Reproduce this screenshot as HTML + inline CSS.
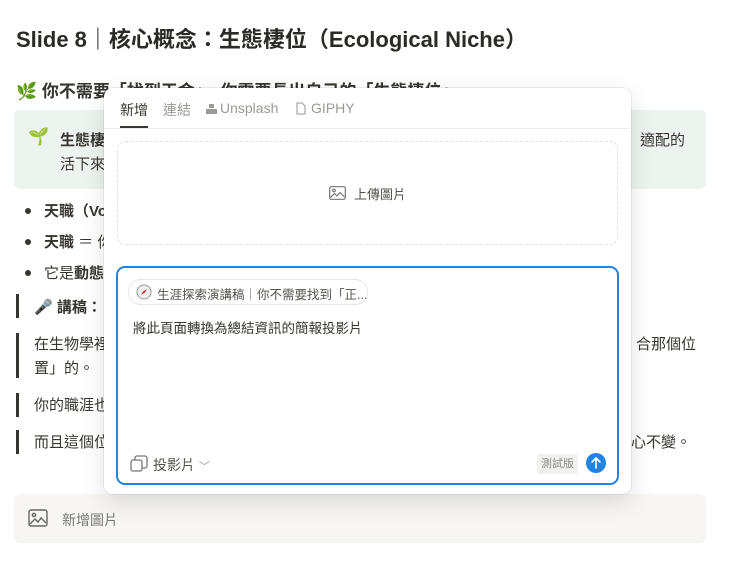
<!DOCTYPE html>
<html><head><meta charset="utf-8"><style>
*{margin:0;padding:0;box-sizing:border-box}
body{width:740px;height:577px;background:#fff;position:relative;overflow:hidden;font-family:"Liberation Sans","Noto Sans CJK TC",sans-serif;color:#37352f}
.a{position:absolute;white-space:nowrap}
.q{position:absolute;left:16px;width:3px;background:#37352f}
.dot{position:absolute;left:25px;width:6px;height:6px;border-radius:50%;background:#37352f}
</style></head><body>
<div class="a" style="left:16px;top:22px;font-size:22px;font-weight:bold;color:#2b2a27">Slide 8｜核心概念：生態棲位（Ecological Niche）</div>
<div class="a" style="left:16px;top:77px;font-size:17px;font-weight:bold">🌿 你不需要「找到天命」，你需要長出自己的「生態棲位」</div>
<div class="a" style="left:14px;top:110px;width:692px;height:79px;background:#edf3ee;border-radius:6px"></div>
<div class="a" style="left:28px;top:127px;font-size:17px;color:#4caf50">🌱</div>
<div class="a" style="left:60px;top:129px;font-size:15px;font-weight:bold">生態棲</div>
<div class="a" style="left:60px;top:153px;font-size:15px">活下來</div>
<div class="a" style="left:640px;top:129px;font-size:15px">適配的</div>
<div class="dot" style="top:208px"></div><div class="a" style="left:44px;top:200px;font-size:15px;font-weight:bold">天職（Vo</div>
<div class="dot" style="top:239px"></div><div class="a" style="left:44px;top:231px;font-size:15px"><b>天職</b> ＝ 你</div>
<div class="dot" style="top:270px"></div><div class="a" style="left:44px;top:262px;font-size:15px">它是<b>動態</b></div>
<div class="q" style="top:294px;height:24px"></div><div class="a" style="left:34px;top:296px;font-size:15px;font-weight:bold">🎤 講稿：</div>
<div class="q" style="top:333px;height:45px"></div><div class="a" style="left:34px;top:333px;font-size:15px;line-height:24px">在生物學裡<br>置」的。</div>
<div class="a" style="left:636px;top:333px;font-size:15px">合那個位</div>
<div class="q" style="top:393px;height:24px"></div><div class="a" style="left:34px;top:394px;font-size:15px">你的職涯也</div>
<div class="q" style="top:430px;height:24px"></div><div class="a" style="left:34px;top:431px;font-size:15px">而且這個位</div>
<div class="a" style="left:631px;top:431px;font-size:15px">心不變。</div>
<div class="a" style="left:14px;top:494px;width:692px;height:49px;background:#f7f6f3;border-radius:6px"></div>
<svg class="a" style="left:28px;top:509px" width="20" height="18" viewBox="0 0 20 18" fill="none" stroke="#666" stroke-width="1.4"><rect x="1" y="1" width="18" height="16" rx="2"/><circle cx="6" cy="6" r="1.6"/><path d="M2 15l5-5 3 3 3-4 5 5"/></svg>
<div class="a" style="left:62px;top:510px;font-size:14px;color:#787774">新增圖片</div>

<div class="a" style="left:104px;top:88px;width:527px;height:406px;background:#fff;border-radius:9px;box-shadow:0 0 0 1px rgba(0,0,0,.06),0 8px 24px rgba(0,0,0,.12)"></div>
<div class="a" style="left:120px;top:100px;font-size:14px;color:#37352f">新增</div>
<div class="a" style="left:120px;top:126px;width:28px;height:2px;background:#37352f"></div>
<div class="a" style="left:104px;top:128px;width:527px;height:1px;background:#ececea"></div>
<div class="a" style="left:163px;top:100px;font-size:14px;color:#9b9a97">連結</div>
<svg class="a" style="left:206px;top:103px" width="11" height="11" viewBox="0 0 11 11" fill="#9b9a97"><rect x="3" y="1" width="5" height="4"/><rect x="0" y="6" width="11" height="5"/></svg>
<div class="a" style="left:220px;top:100px;font-size:14px;color:#9b9a97">Unsplash</div>
<svg class="a" style="left:296px;top:102px" width="10" height="13" viewBox="0 0 10 13" fill="none" stroke="#9b9a97" stroke-width="1.1"><path d="M1 1h5l3 3v8H1z"/></svg>
<div class="a" style="left:311px;top:100px;font-size:14px;color:#9b9a97">GIPHY</div>
<div class="a" style="left:117px;top:141px;width:501px;height:104px;border:1.5px dashed #e3e2e0;border-radius:8px"></div>
<svg class="a" style="left:329px;top:186px" width="17" height="14" viewBox="0 0 17 14" fill="none" stroke="#777" stroke-width="1.2"><rect x=".7" y=".7" width="15.6" height="12.6" rx="1.5"/><circle cx="5" cy="4.5" r="1.3"/><path d="M1.5 11.5l4-4 2.5 2.5 3-3.5 4.5 4.5"/></svg>
<div class="a" style="left:354px;top:184px;font-size:13px;color:#55534e">上傳圖片</div>
<div class="a" style="left:116px;top:266px;width:503px;height:219px;border:2px solid #2383e2;border-radius:9px"></div>
<div class="a" style="left:128px;top:279px;width:240px;height:26px;border:1px solid #e6e5e3;border-radius:13px"></div>
<svg class="a" style="left:136px;top:284px" width="16" height="16" viewBox="0 0 16 16"><circle cx="8" cy="8" r="7" fill="#f0f0f0" stroke="#999"/><path d="M11 5L7 7.5 5 11 9 8.5z" fill="#d33"/></svg>
<div class="a" style="left:157px;top:284px;font-size:12.5px;color:#55534e">生涯探索演講稿｜你不需要找到「正...</div>
<div class="a" style="left:133px;top:317px;font-size:13.5px;color:#37352f">將此頁面轉換為總結資訊的簡報投影片</div>
<svg class="a" style="left:130px;top:455px" width="18" height="17" viewBox="0 0 18 17" fill="none" stroke="#777" stroke-width="1.3"><rect x="1" y="5" width="11" height="11" rx="2"/><path d="M5 5V3a2 2 0 0 1 2-2h8a2 2 0 0 1 2 2v8a2 2 0 0 1-2 2h-3"/></svg>
<div class="a" style="left:153px;top:455px;font-size:14px;color:#55534e">投影片 <span style="color:#999;font-size:11px">﹀</span></div>
<div class="a" style="left:537px;top:454px;width:41px;height:20px;background:#f1f1ef;border-radius:3px;font-size:11px;color:#888;text-align:center;line-height:20px">測試版</div>
<div class="a" style="left:586px;top:453px;width:20px;height:20px;border-radius:50%;background:#2383e2"></div>
<svg class="a" style="left:586px;top:453px" width="20" height="20" viewBox="0 0 20 20" fill="none" stroke="#fff" stroke-width="1.6" stroke-linecap="round"><path d="M10 15V5M6 9l4-4 4 4"/></svg>
</body></html>
